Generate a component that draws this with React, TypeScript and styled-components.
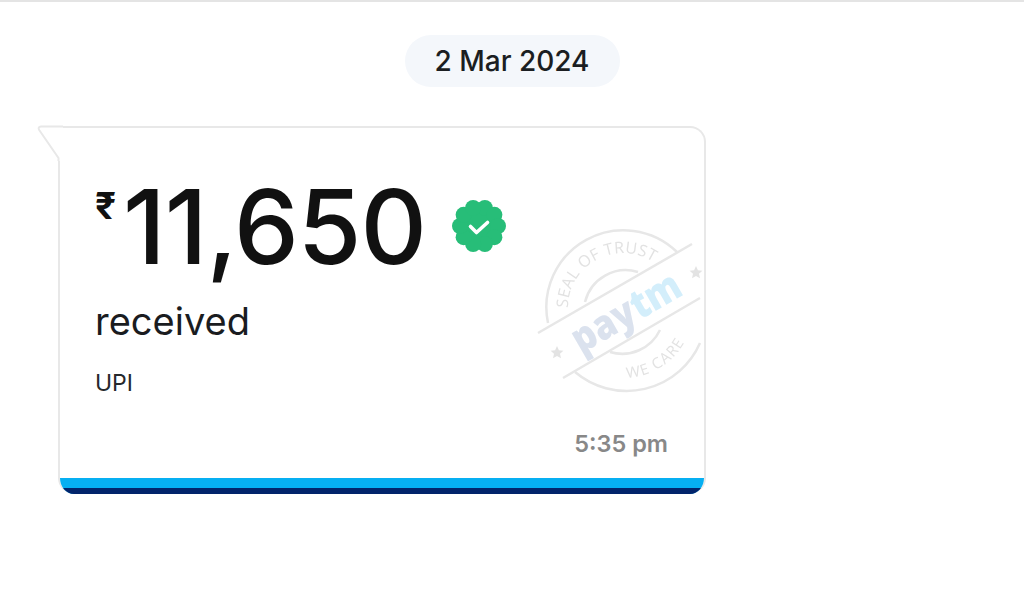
import styled, { createGlobalStyle } from "styled-components";

const GlobalStyle = createGlobalStyle`
  html, body {
    margin: 0;
    padding: 0;
    background: #fff;
  }
  body {
    font-family: "Inter", "Noto Sans", sans-serif;
    color: #16181b;
  }
`;

const STAR = "l1.9 4.2 4.5.5-3.400 3 1 4.500-4-2.300-4 2.300 1-4.500-3.400-3 4.500-.5z";

const SealMark = () => (
    <Seal viewBox="0 0 180 170" aria-hidden="true">
        <defs>
            <path id="sealTop" d="M 31 84 A 55 55 0 0 1 119 40" />
            <path id="sealBottom" d="M 90 154 A 70 70 0 0 0 150 113" />
        </defs>
        <g fill="none" stroke="#e7e7e7" strokeWidth="2.500">
            <path d="M 11 99 A 77 77 0 0 1 140 28" />
            <path d="M 38 148 A 80 80 0 0 0 163 119" />
            <path d="M 48 78 A 42 42 0 0 1 101 48" />
            <path d="M 73 128 A 42 42 0 0 0 123 106" />
            <path d="M 1 109 L 155 20" />
            <path d="M 26 154 L 163 74" />
        </g>
        <SealText fontSize="16">
            <textPath href="#sealTop" textLength="118">SEAL OF TRUST</textPath>
        </SealText>
        <SealText fontSize="15">
            <textPath href="#sealBottom" textLength="70">WE CARE</textPath>
        </SealText>
        <text
            x="44"
            y="130"
            fontSize="41"
            fontWeight="800"
            textLength="120"
            lengthAdjust="spacingAndGlyphs"
            transform="rotate(-30 44 130)"
        >
            <tspan fill="#dbe2ee">pay</tspan>
            <tspan fill="#d3eefb">tm</tspan>
        </text>
        <path d={`M20 122${STAR}`} fill="#e3e3e3" />
        <path d={`M159 42${STAR}`} fill="#e3e3e3" />
    </Seal>
);

const VerifiedBadge = () => (
    <Badge viewBox="0 0 54 54" aria-hidden="true">
        <g fill="#27bd78">
            <circle cx="27" cy="27" r="23" />
            {Array.from({ length: 10 }).map((_, i) => {
                const a = (i * Math.PI) / 5 + Math.PI / 10;
                return (
                    <circle
                        key={i}
                        cx={27 + 19 * Math.sin(a)}
                        cy={27 - 19 * Math.cos(a)}
                        r="8"
                    />
                );
            })}
        </g>
        <path
            d="M18.500 27.500l6 6 11-10"
            fill="none"
            stroke="#fff"
            strokeWidth="3.600"
            strokeLinecap="round"
            strokeLinejoin="round"
        />
    </Badge>
);

export default function App() {
    return (
        <>
            <GlobalStyle />
            <Page>
                <DateRow>
                    <DatePill>2 Mar 2024</DatePill>
                </DateRow>
                <Bubble>
                    <Tail viewBox="0 0 26 36" aria-hidden="true">
                        <path d="M26 1.500H4L2.200 5L21.500 33V36H26Z" fill="#fff" />
                        <path
                            d="M26 1.500H4C1.800 1.500 1 3 2.200 5L21.500 33V36"
                            fill="none"
                            stroke="#e8e8e8"
                            strokeWidth="2"
                        />
                    </Tail>
                    <Card>
                        <CardBody>
                            <AmountRow>
                                <Rupee>₹</Rupee>
                                <Amount>11,650</Amount>
                                <VerifiedBadge />
                            </AmountRow>
                            <Status>received</Status>
                            <Method>UPI</Method>
                            <Time>5:35 pm</Time>
                            <SealMark />
                        </CardBody>
                        <BottomBar />
                    </Card>
                </Bubble>
            </Page>
        </>
    );
}

const Page = styled.div`
  height: 592px;
  overflow: hidden;
  border-top: 2px solid #e4e4e4;
  box-sizing: border-box;
`;

const DateRow = styled.div`
  display: flex;
  justify-content: center;
  padding-top: 33px;
`;

const DatePill = styled.div`
  width: 215px;
  height: 52px;
  display: flex;
  align-items: center;
  justify-content: center;
  border-radius: 26px;
  background: #f4f7fb;
  font-size: 28px;
  font-weight: 500;
  color: #1b1e22;
`;

const Bubble = styled.div`
  position: relative;
  width: 648px;
  margin: 39px 0 0 58px;
`;

const Tail = styled.svg`
  position: absolute;
  left: -21px;
  top: -1px;
  width: 26px;
  height: 36px;
  overflow: visible;
`;

const Card = styled.div`
  width: 648px;
  height: 368px;
  box-sizing: border-box;
  display: flex;
  flex-direction: column;
  border: 2px solid #e8e8e8;
  border-bottom: none;
  border-radius: 0 16px 16px 16px;
  overflow: hidden;
  background: #fff;
`;

const CardBody = styled.div`
  position: relative;
  flex: 1;
  padding: 38px 36px 0 35px;
  display: flex;
  flex-direction: column;
`;

const AmountRow = styled.div`
  display: flex;
  align-items: flex-start;
  height: 122px;
`;

const Rupee = styled.span`
  font-size: 37px;
  font-weight: 700;
  line-height: 1;
  margin-top: 21px;
  width: 28px;
  color: #111;
`;

const Amount = styled.span`
  font-size: 103px;
  font-weight: 500;
  line-height: 122px;
  letter-spacing: -1px;
  color: #111;
`;

const Badge = styled.svg`
  width: 54px;
  height: 54px;
  margin: 33px 0 0 26px;
  flex: none;
`;

const Status = styled.div`
  font-size: 38px;
  font-weight: 400;
  line-height: 44px;
  margin-top: 11px;
  color: #1a1c1f;
`;

const Method = styled.div`
  font-size: 23px;
  line-height: 28px;
  margin-top: 26px;
  color: #26282b;
`;

const Time = styled.div`
  align-self: flex-end;
  font-size: 23.500px;
  font-weight: 600;
  line-height: 28px;
  margin-top: 33px;
  color: #888;
`;

const Seal = styled.svg`
  position: absolute;
  left: 477px;
  top: 96px;
  width: 180px;
  height: 170px;
  font-family: "Open Sans", sans-serif;
  filter: blur(0.4px);
`;

const SealText = styled.text`
  fill: #e2e2e2;
`;

const BottomBar = styled.div`
  height: 16px;
  flex: none;
  box-sizing: border-box;
  background: #06aff2;
  border-bottom: 6px solid #02246b;
`;
